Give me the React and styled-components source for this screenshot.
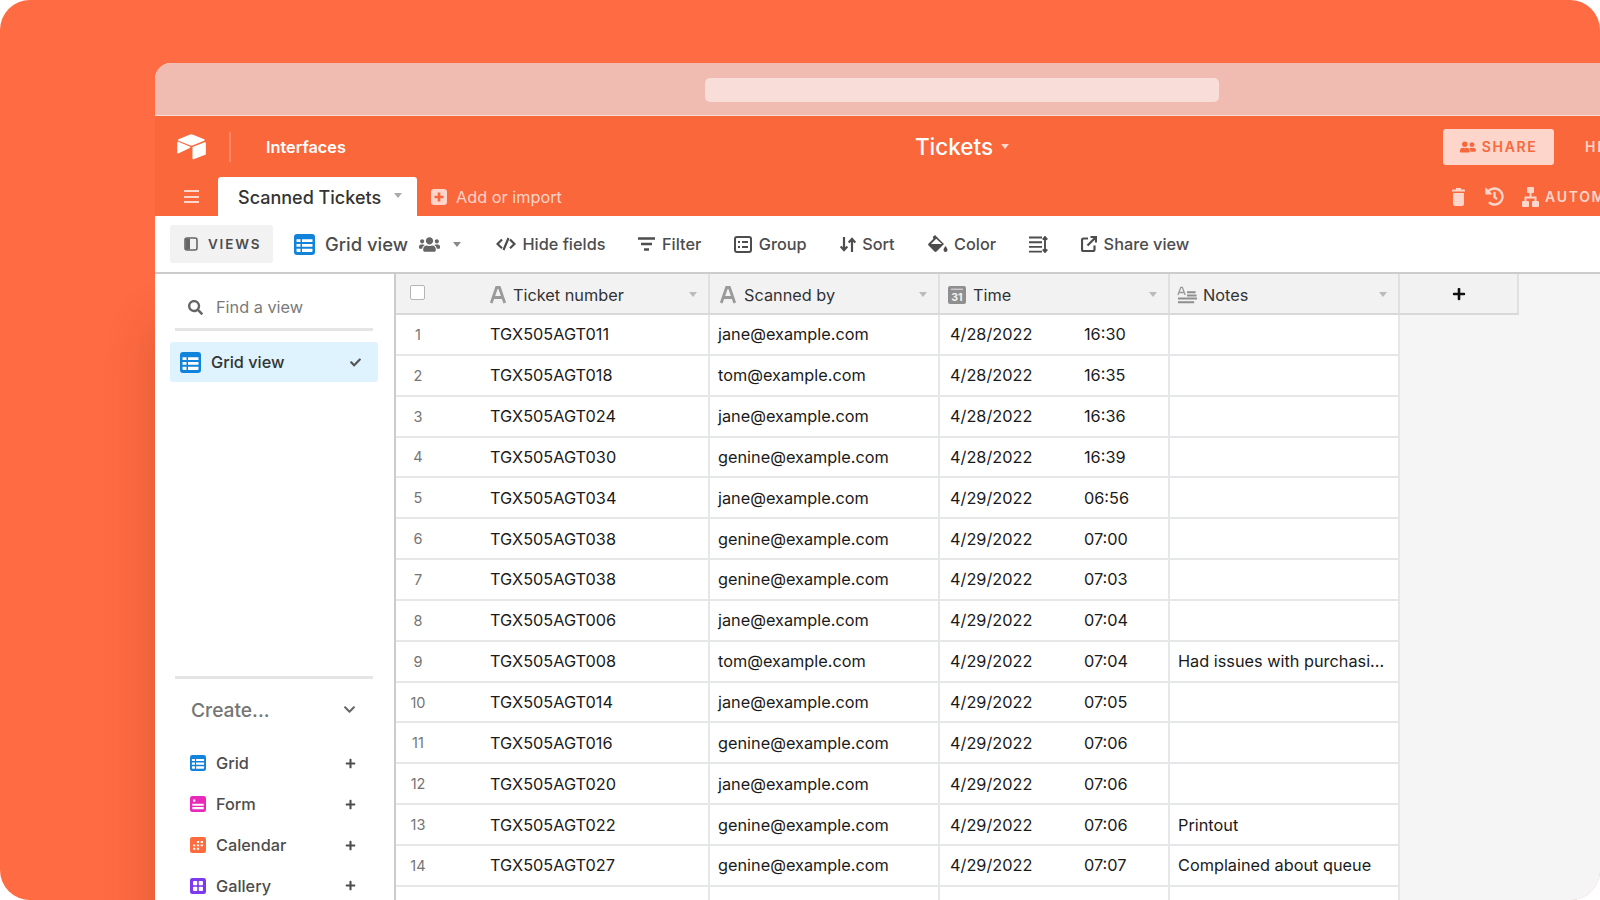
import React from "react";
import styled, { createGlobalStyle } from "styled-components";
import { FaUsers, FaUserFriends, FaSearch, FaHistory, FaCheck, FaChevronDown, FaPlus } from "react-icons/fa";

const GlobalStyle = createGlobalStyle`
  html, body { margin: 0; padding: 0; background: #fff; }
  body { font-family: Inter, "Liberation Sans", sans-serif; -webkit-font-smoothing: antialiased; }
`;

const Stage = styled.div`
  width: 1600px;
  height: 900px;
  overflow: hidden;
  background: #ff6b42;
  border-radius: 30px;
  padding: 63px 0 0 155px;
  box-sizing: border-box;
`;

const Window = styled.div`
  width: 1614px;
  height: 837px;
  border-radius: 16px 16px 0 0;
  overflow: hidden;
  display: flex;
  flex-direction: column;
  background: #f5f5f5;
  box-shadow: 0 260px 50px rgba(90, 30, 10, 0.22);
`;

const Chrome = styled.div`
  height: 53px;
  background: #f0bcb1;
  border-bottom: 1px solid #f8dfd9;
  display: flex;
  align-items: flex-start;
  justify-content: center;
  padding-top: 15px;
  box-sizing: border-box;
  flex-shrink: 0;
`;

const AddressBar = styled.div`
  width: 514px;
  height: 24px;
  border-radius: 5px;
  background: #f8ddd8;
`;

const Header = styled.div`
  background: #fa673b;
  height: 100px;
  flex-shrink: 0;
  display: flex;
  flex-direction: column;
`;

const TopRow = styled.div`
  height: 61px;
  display: grid;
  grid-template-columns: 1fr auto 1fr;
  align-items: center;
`;

const Brand = styled.div`
  display: flex;
  align-items: center;
  padding-left: 21px;
  color: #fff;
`;

const Divider = styled.div`
  width: 2px;
  height: 30px;
  background: rgba(255, 255, 255, 0.22);
  margin: 0 35px 0 22px;
`;

const InterfacesLabel = styled.span`
  font-size: 16.3px;
  font-weight: 600;
  color: #fff;
`;

const BaseTitle = styled.div`
  display: flex;
  align-items: center;
  gap: 8px;
  color: #fff;
  font-size: 22.5px;
  font-weight: 500;
`;

const Caret = styled.span`
  display: inline-block;
  width: 0;
  height: 0;
  border-left: ${(p) => p.$size || 5}px solid transparent;
  border-right: ${(p) => p.$size || 5}px solid transparent;
  border-top: ${(p) => (p.$size || 5) + 1}px solid ${(p) => p.$color || "#bbb"};
  flex-shrink: 0;
`;

const TopActions = styled.div`
  display: flex;
  align-items: center;
  gap: 31px;
  padding-left: 434px;
`;

const ShareButton = styled.div`
  width: 111px;
  height: 36px;
  border-radius: 3px;
  background: #fdd5ca;
  color: #fa673b;
  display: flex;
  align-items: center;
  justify-content: center;
  gap: 6px;
  font-size: 14px;
  font-weight: 600;
  letter-spacing: 1.7px;
`;

const HelpLabel = styled.span`
  color: #fdd5ca;
  font-size: 14px;
  font-weight: 600;
  letter-spacing: 1.7px;
`;

const TabRow = styled.div`
  flex: 1;
  display: flex;
  align-items: flex-end;
  padding-left: 29px;
`;

const MenuLines = styled.div`
  width: 15px;
  height: 13px;
  margin: 0 19px 13px 0;
  border-top: 2px solid #fdd5ca;
  border-bottom: 2px solid #fdd5ca;
  box-sizing: border-box;
  display: flex;
  align-items: center;
  &::before { content: ""; width: 100%; height: 2px; background: #fdd5ca; }
`;

const ActiveTab = styled.div`
  width: 199px;
  height: 39px;
  background: #fff;
  border-radius: 3px 3px 0 0;
  display: flex;
  align-items: center;
  padding: 1px 0 0 20px;
  box-sizing: border-box;
  font-size: 18px;
  font-weight: 500;
  color: #333;
`;

const TabCaret = styled(Caret)`
  margin: -4px 0 0 13px;
`;

const AddTable = styled.div`
  display: flex;
  align-items: center;
  height: 39px;
  margin-left: 14px;
  gap: 9px;
  font-size: 16.3px;
  font-weight: 400;
  color: #fdd5ca;
`;

const TabTools = styled.div`
  margin-left: auto;
  height: 39px;
  display: flex;
  align-items: center;
  gap: 18px;
  padding-right: 100px;
  color: #fdd5ca;
`;

const TrashSlot = styled.span`
  display: flex;
  margin-right: 2px;
`;

const AutomationLabel = styled.span`
  display: flex;
  align-items: center;
  gap: 6px;
  font-size: 14px;
  font-weight: 600;
  letter-spacing: 1.7px;
`;

const Toolbar = styled.div`
  height: 58px;
  flex-shrink: 0;
  background: #fff;
  border-bottom: 2px solid #cccccc;
  box-sizing: border-box;
  display: flex;
  align-items: center;
  padding: 0 0 0 15px;
  color: #4d4d4d;
`;

const ViewsButton = styled.div`
  width: 103px;
  height: 38px;
  background: #f2f2f2;
  border-radius: 3px;
  display: flex;
  align-items: center;
  padding-left: 14px;
  gap: 10px;
  box-sizing: border-box;
  font-size: 13.5px;
  font-weight: 600;
  letter-spacing: 1.8px;
  color: #4d4d4d;
  margin-right: 21px;
`;

const ViewName = styled.div`
  display: flex;
  align-items: center;
  font-size: 18.4px;
  font-weight: 500;
  color: #4d4d4d;
  gap: 10px;
  margin-right: 35px;
`;

const PeopleIcon = styled(FaUsers)`
  margin-left: 1px;
  color: #666;
`;

const ViewCaret = styled(Caret)`
  margin-left: 3px;
`;

const ToolList = styled.div`
  display: flex;
  align-items: center;
  gap: 33px;
`;

const Tool = styled.div`
  display: flex;
  align-items: center;
  gap: 6.5px;
  font-size: 16.3px;
  font-weight: 500;
  color: #4d4d4d;
`;

const Body = styled.div`
  flex: 1;
  display: flex;
  min-height: 0;
`;

const Sidebar = styled.div`
  width: 208px;
  flex-shrink: 0;
  background: #fff;
  border-right: 2px solid #cccccc;
  display: flex;
  flex-direction: column;
  padding: 0 16px 0 15px;
`;

const SearchRow = styled.div`
  height: 54px;
  flex-shrink: 0;
  display: flex;
  align-items: center;
  gap: 13px;
  box-sizing: border-box;
  padding: 12px 0 0 13px;
  margin: 0 5px;
  font-size: 16.3px;
  color: #7a7a7a;
  border-bottom: 3px solid #e5e5e5;
  height: 57px;
`;

const ViewItem = styled.div`
  height: 40px;
  flex-shrink: 0;
  margin-top: 11px;
  background: #dff3fe;
  border-radius: 3px;
  display: flex;
  align-items: center;
  padding: 0 17px 0 10px;
  gap: 10px;
  font-size: 16.3px;
  font-weight: 500;
  color: #333;
`;

const CheckMark = styled.span`
  margin-left: auto;
  display: flex;
  color: #555;
`;

const CreateSection = styled.div`
  margin: 294px 5px 0;
  flex-shrink: 0;
  border-top: 3px solid #e5e5e5;
`;

const CreateHead = styled.div`
  height: 61px;
  display: flex;
  align-items: center;
  justify-content: space-between;
  padding: 0 17px 0 16px;
  font-size: 19.2px;
  font-weight: 500;
  color: #757575;
`;

const CreateList = styled.div`
  padding-top: 3px;
`;

const CreateItem = styled.div`
  height: 40.85px;
  display: flex;
  align-items: center;
  padding: 0 17px 0 15px;
  gap: 10px;
  font-size: 16.3px;
  font-weight: 500;
  color: #4d4d4d;
`;

const PlusMark = styled.span`
  margin-left: auto;
  display: flex;
  color: #4d4d4d;
`;

const GridArea = styled.div`
  flex: 1;
  min-width: 0;
  background: #f5f5f5;
`;

const HeaderRow = styled.div`
  display: grid;
  grid-template-columns: 314px 230px 230px 230px 119px;
  height: 39px;
  width: 1123px;
  border-bottom: 2px solid #d9d9d9;
`;

const HeaderCell = styled.div`
  background: #f2f2f2;
  border-right: 2px solid #e0e0e0;
  display: flex;
  align-items: center;
  padding: 2px 11px 0 ${(p) => p.$left || 9}px;
  box-sizing: border-box;
  gap: ${(p) => p.$gap || 7}px;
  font-size: 16.3px;
  font-weight: 400;
  color: #333;
`;

const HeaderLabel = styled.span`
  flex: 1;
`;

const SelectBox = styled.span`
  width: 13px;
  height: 13px;
  border: 1.5px solid #b5b5b5;
  border-radius: 2px;
  background: #fff;
  margin-right: 58px;
  margin-top: -4px;
`;

const AddColumn = styled(HeaderCell)`
  justify-content: center;
  color: #111;
  padding: 0;
`;

const Row = styled.div`
  display: grid;
  grid-template-columns: 314px 230px 230px 230px;
  height: 40.85px;
  width: 1004px;
  background: #fff;
  border-bottom: 2px solid #e5e7e9;
  box-sizing: border-box;
`;

const Cell = styled.div`
  display: flex;
  align-items: center;
  padding: 0 8px;
  font-size: 16.3px;
  font-weight: 400;
  color: #1a1a1a;
  border-right: 2px solid #e5e7e9;
  white-space: nowrap;
  overflow: hidden;
`;

const TicketCell = styled(Cell)`
  padding: 0;
`;

const TimeCell = styled(Cell)`
  padding-left: 10px;
`;

const RowNumber = styled.span`
  width: 44px;
  text-align: center;
  font-size: 14.5px;
  color: #757575;
  margin-right: 50px;
`;

const DateText = styled.span`
  width: 134px;
`;

const Square = ({ color, size = 21, children }) => (
  <svg width={size} height={size} viewBox="0 0 21 21" style={{ flexShrink: 0 }}>
    <rect width="21" height="21" rx="3" fill={color} />
    {children}
  </svg>
);

const GridGlyph = ({ color = "#1283da", size }) => (
  <Square color={color} size={size}>
    <path d="M2.5 5.2h4V8h-4zM8 5.2h10.5V8H8zM2.5 10h4v2.8h-4zM8 10h10.5v2.8H8zM2.5 14.8h4v3.2h-3a1 1 0 0 1-1-1zM8 14.8h10.5V17a1 1 0 0 1-1 1H8z" fill="#fff" />
  </Square>
);

const FormGlyph = () => (
  <Square color="#e929ba" size={16}>
    <path d="M4 6h3M3 11.5h15M3 16h15" stroke="#fff" strokeWidth="2.8" />
  </Square>
);

const CalendarGlyph = () => (
  <Square color="#ff6b3d" size={16}>
    <path d="M9 6.5h3M14 6.5h3M4 11h3M9 11h3M14 11h3M4 15.5h3M9 15.5h3" stroke="#fff" strokeWidth="2.6" />
  </Square>
);

const GalleryGlyph = () => (
  <Square color="#7c39ed" size={16}>
    <rect x="4" y="4" width="5.5" height="5.5" rx="1" fill="#fff" />
    <rect x="11.5" y="4" width="5.5" height="5.5" rx="1" fill="#fff" />
    <rect x="4" y="11.5" width="5.5" height="5.5" rx="1" fill="#fff" />
    <rect x="11.5" y="11.5" width="5.5" height="5.5" rx="1" fill="#fff" />
  </Square>
);

const AirtableLogo = () => (
  <svg width="31" height="26" viewBox="0 0 32 27" fill="#fff">
    <path d="M14 .8 2.5 5.5c-.6.3-.6 1.1 0 1.4l11.8 4.7c1 .4 2.2.4 3.2 0l11.7-4.7c.6-.3.6-1.1 0-1.4L17.6.8c-1.1-.5-2.5-.5-3.6 0z" />
    <path d="M17 14v11.5c0 .6.6 1 1.1.8l12.2-4.7c.4-.1.6-.5.6-.8V9.3c0-.6-.6-1-1.1-.8l-12.2 4.7c-.4.1-.6.5-.6.8z" />
    <path d="M14.2 14.6 2.3 20.2c-.5.2-1.1-.1-1.1-.7V8.9c0-.6.6-1 1.1-.8l11.9 4.8c.7.3.7 1.4 0 1.7z" />
  </svg>
);

const TextFieldIcon = () => (
  <svg width="16" height="18" viewBox="0 0 16 18" style={{ flexShrink: 0 }}>
    <path d="M1.2 17 6.6 1.5h2.8L14.8 17M3.6 11.5h8.8" stroke="#9a9a9a" strokeWidth="2.8" fill="none" />
  </svg>
);

const DateFieldIcon = () => (
  <svg width="18" height="18" viewBox="0 0 18 18" style={{ flexShrink: 0 }}>
    <rect width="18" height="18" rx="2" fill="#8f8f8f" />
    <path d="M3 3.2h12" stroke="#e5e5e5" strokeWidth="1" />
    <text x="9" y="15" textAnchor="middle" fontSize="10.5" fontWeight="700" fontFamily="Inter" fill="#f2f2f2">31</text>
  </svg>
);

const NotesFieldIcon = () => (
  <svg width="20" height="18" viewBox="0 0 21 18" style={{ flexShrink: 0 }}>
    <path d="M1 9 4 1h1.6l3 8M2.3 6.4h5" stroke="#9a9a9a" strokeWidth="1.4" fill="none" />
    <path d="M10.5 6h9M10.5 9.5h10M1 12.8h20M1 16.5h17" stroke="#8f8f8f" strokeWidth="2.1" />
  </svg>
);

const HideFieldsIcon = () => (
  <svg width="20" height="14" viewBox="0 0 20 14" fill="none" stroke="#4d4d4d" strokeWidth="2.2">
    <path d="M6 2.5 1.5 7 6 11.2M14 2.5 18.5 7 14 11.2M12.5 1 7.5 13" />
  </svg>
);

const FilterIcon = () => (
  <svg width="17" height="14" viewBox="0 0 17 14" stroke="#4d4d4d" strokeWidth="2.4">
    <path d="M0 1.5h17M3 7h11M6 12.5h5" />
  </svg>
);

const GroupIcon = () => (
  <svg width="18" height="17" viewBox="0 0 18 17" fill="none" stroke="#4d4d4d">
    <rect x="1" y="1" width="16" height="15" rx="2" strokeWidth="2" />
    <path d="M4 6h2M8 6h6M4 11h2M8 11h6" strokeWidth="2" />
  </svg>
);

const SortIcon = () => (
  <svg width="16" height="15" viewBox="0 0 16 15" fill="none" stroke="#4d4d4d" strokeWidth="2.2">
    <path d="M4 0v13M.7 9.5 4 13.2l3.3-3.7M12 15V2M8.7 5.5 12 1.8l3.3 3.7" />
  </svg>
);

const ColorIcon = () => (
  <svg width="20" height="18" viewBox="0 0 20 18" fill="#4d4d4d">
    <path d="M7 0 9 2l7 7-7.5 7.5c-.6.6-1.4.6-2 0L.6 10.6c-.6-.6-.6-1.4 0-2L5.5 3.7 4.7 2zM7 5 3 9h11L8.2 3.8z" />
    <path d="M17.5 11c1 1.5 2 2.7 2 4a2 2 0 0 1-4 0c0-1.3 1-2.5 2-4z" />
  </svg>
);

const RowHeightIcon = () => (
  <svg width="19" height="17" viewBox="0 0 19 17" fill="none" stroke="#4d4d4d" strokeWidth="1.9">
    <path d="M0 1.5h13M0 6.2h13M0 10.9h13M0 15.6h13M16 1v15M13.8 3.6 16 1l2.2 2.6M13.8 13.4 16 16l2.2-2.6" />
  </svg>
);

const ShareViewIcon = () => (
  <svg width="16" height="16" viewBox="0 0 16 16" fill="none" stroke="#4d4d4d" strokeWidth="2.2">
    <path d="M7 2.5H2.5a1.5 1.5 0 0 0-1.5 1.5v9.5A1.5 1.5 0 0 0 2.5 15H12a1.5 1.5 0 0 0 1.5-1.5V9.5M6.5 9.5 14.5 1.5M9.5 1h5.5v5.5" />
  </svg>
);

const TrashIcon = () => (
  <svg width="13" height="18" viewBox="0 0 13 18" fill="#fdd5ca">
    <path d="M4 0h5v1.5h3a1 1 0 0 1 1 1v1H0v-1a1 1 0 0 1 1-1h3zM1 5h11v11a2 2 0 0 1-2 2H3a2 2 0 0 1-2-2z" />
  </svg>
);

const AutomationIcon = () => (
  <svg width="17" height="20" viewBox="0 0 17 20" fill="#fdd5ca">
    <rect x="5" y="0" width="7" height="6" rx="1" />
    <rect x="0" y="14" width="7" height="6" rx="1" />
    <rect x="10" y="14" width="7" height="6" rx="1" />
    <path d="M8.5 5v5M3.5 15v-4.5h10V15" fill="none" stroke="#fdd5ca" strokeWidth="2" />
  </svg>
);

const AddTableIcon = () => (
  <svg width="16" height="16" viewBox="0 0 16 16">
    <rect width="16" height="16" rx="3" fill="#fdd5ca" />
    <path d="M8 3.5v9M3.5 8h9" stroke="#fa673b" strokeWidth="2.6" />
  </svg>
);

const ViewsIcon = () => (
  <svg width="14" height="14" viewBox="0 0 14 14">
    <rect x="1" y="1" width="12" height="12" rx="2" fill="none" stroke="#666" strokeWidth="1.6" />
    <path d="M1.5 3a1.5 1.5 0 0 1 1.5-1.5h3v11H3A1.5 1.5 0 0 1 1.5 11z" fill="#666" />
  </svg>
);

const rows = [
  ["TGX505AGT011", "jane@example.com", "4/28/2022", "16:30", ""],
  ["TGX505AGT018", "tom@example.com", "4/28/2022", "16:35", ""],
  ["TGX505AGT024", "jane@example.com", "4/28/2022", "16:36", ""],
  ["TGX505AGT030", "genine@example.com", "4/28/2022", "16:39", ""],
  ["TGX505AGT034", "jane@example.com", "4/29/2022", "06:56", ""],
  ["TGX505AGT038", "genine@example.com", "4/29/2022", "07:00", ""],
  ["TGX505AGT038", "genine@example.com", "4/29/2022", "07:03", ""],
  ["TGX505AGT006", "jane@example.com", "4/29/2022", "07:04", ""],
  ["TGX505AGT008", "tom@example.com", "4/29/2022", "07:04", "Had issues with purchasi..."],
  ["TGX505AGT014", "jane@example.com", "4/29/2022", "07:05", ""],
  ["TGX505AGT016", "genine@example.com", "4/29/2022", "07:06", ""],
  ["TGX505AGT020", "jane@example.com", "4/29/2022", "07:06", ""],
  ["TGX505AGT022", "genine@example.com", "4/29/2022", "07:06", "Printout"],
  ["TGX505AGT027", "genine@example.com", "4/29/2022", "07:07", "Complained about queue"],
  ["", "", "", "", ""],
];

const createItems = [
  ["Grid", <GridGlyph size={16} />],
  ["Form", <FormGlyph />],
  ["Calendar", <CalendarGlyph />],
  ["Gallery", <GalleryGlyph />],
];

const tools = [
  ["Hide fields", <HideFieldsIcon />],
  ["Filter", <FilterIcon />],
  ["Group", <GroupIcon />],
  ["Sort", <SortIcon />],
  ["Color", <ColorIcon />],
  ["", <RowHeightIcon />],
  ["Share view", <ShareViewIcon />],
];

export default function App() {
  return (
    <>
      <GlobalStyle />
      <Stage>
        <Window>
          <Chrome>
            <AddressBar />
          </Chrome>
          <Header>
            <TopRow>
              <Brand>
                <AirtableLogo />
                <Divider />
                <InterfacesLabel>Interfaces</InterfacesLabel>
              </Brand>
              <BaseTitle>
                Tickets
                <Caret $size={4.5} $color="#fdd5ca" />
              </BaseTitle>
              <TopActions>
                <ShareButton>
                  <FaUserFriends size={16} />
                  SHARE
                </ShareButton>
                <HelpLabel>HELP</HelpLabel>
              </TopActions>
            </TopRow>
            <TabRow>
              <MenuLines />
              <ActiveTab>
                Scanned Tickets
                <TabCaret $size={4.5} $color="#aaa" />
              </ActiveTab>
              <AddTable>
                <AddTableIcon />
                Add or import
              </AddTable>
              <TabTools>
                <TrashSlot>
                  <TrashIcon />
                </TrashSlot>
                <FaHistory size={19} />
                <AutomationLabel>
                  <AutomationIcon />
                  AUTOMATIONS
                </AutomationLabel>
              </TabTools>
            </TabRow>
          </Header>
          <Toolbar>
            <ViewsButton>
              <ViewsIcon />
              VIEWS
            </ViewsButton>
            <ViewName>
              <GridGlyph />
              Grid view
              <PeopleIcon size={21} />
              <ViewCaret $size={4.5} $color="#888" />
            </ViewName>
            <ToolList>
              {tools.map(([label, icon], i) => (
                <Tool key={i}>
                  {icon}
                  {label}
                </Tool>
              ))}
            </ToolList>
          </Toolbar>
          <Body>
            <Sidebar>
              <SearchRow>
                <FaSearch size={15} color="#666" />
                Find a view
              </SearchRow>
              <ViewItem>
                <GridGlyph />
                Grid view
                <CheckMark>
                  <FaCheck size={11} />
                </CheckMark>
              </ViewItem>
              <CreateSection>
                <CreateHead>
                  Create...
                  <FaChevronDown size={13} color="#666" />
                </CreateHead>
                <CreateList>
                  {createItems.map(([label, icon]) => (
                    <CreateItem key={label}>
                      {icon}
                      {label}
                      <PlusMark>
                        <FaPlus size={11} />
                      </PlusMark>
                    </CreateItem>
                  ))}
                </CreateList>
              </CreateSection>
            </Sidebar>
            <GridArea>
              <HeaderRow>
                <HeaderCell $left={14}>
                  <SelectBox />
                  <TextFieldIcon />
                  <HeaderLabel>Ticket number</HeaderLabel>
                  <Caret $size={4.5} $color="#bbb" />
                </HeaderCell>
                <HeaderCell $left={10} $gap={8}>
                  <TextFieldIcon />
                  <HeaderLabel>Scanned by</HeaderLabel>
                  <Caret $size={4.5} $color="#bbb" />
                </HeaderCell>
                <HeaderCell $left={8}>
                  <DateFieldIcon />
                  <HeaderLabel>Time</HeaderLabel>
                  <Caret $size={4.5} $color="#bbb" />
                </HeaderCell>
                <HeaderCell $left={7} $gap={6}>
                  <NotesFieldIcon />
                  <HeaderLabel>Notes</HeaderLabel>
                  <Caret $size={4.5} $color="#bbb" />
                </HeaderCell>
                <AddColumn>
                  <FaPlus size={14} />
                </AddColumn>
              </HeaderRow>
              {rows.map((r, i) => (
                <Row key={i}>
                  <TicketCell>
                    <RowNumber>{i < 14 ? i + 1 : ""}</RowNumber>
                    {r[0]}
                  </TicketCell>
                  <Cell>{r[1]}</Cell>
                  <TimeCell>
                    <DateText>{r[2]}</DateText>
                    {r[3]}
                  </TimeCell>
                  <Cell>{r[4]}</Cell>
                </Row>
              ))}
            </GridArea>
          </Body>
        </Window>
      </Stage>
    </>
  );
}
